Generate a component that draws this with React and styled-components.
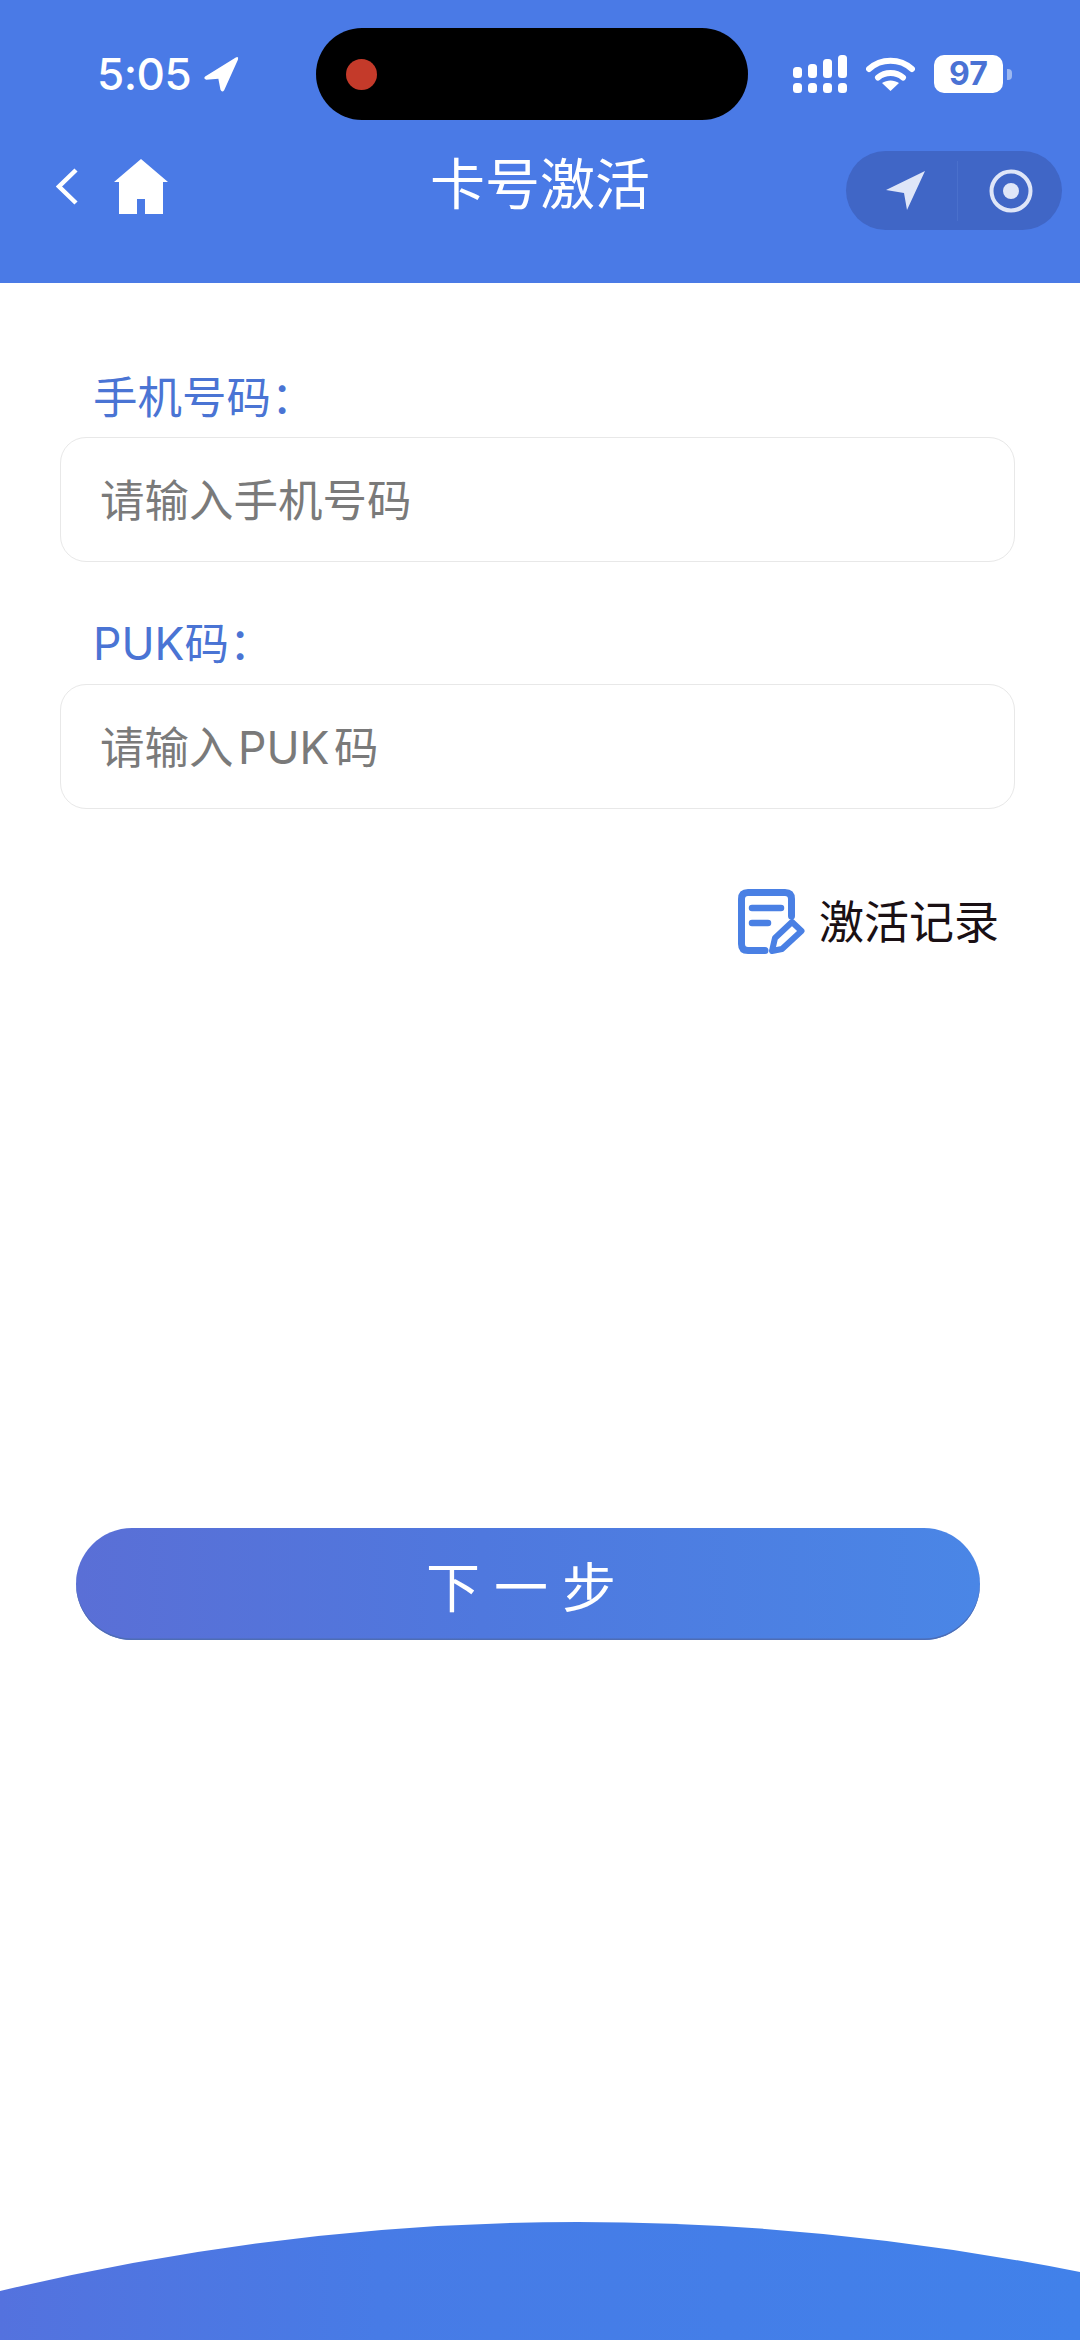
import React from 'react';
import styled, { createGlobalStyle } from 'styled-components';

const GlobalStyle = createGlobalStyle`
  html, body {
    margin: 0;
    padding: 0;
    background: #fff;
  }
  * {
    box-sizing: border-box;
  }
`;

const cjk = `Inter, 'Noto Sans CJK SC', sans-serif`;

const Page = styled.div`
  display: flex;
  flex-direction: column;
  width: 1080px;
  height: 2340px;
  overflow: hidden;
  background: #fff;
  font-family: ${cjk};
`;

const Header = styled.header`
  flex: none;
  height: 283px;
  padding-top: 28px;
  background: #4a7ae6;
  color: #fff;
`;

const StatusBar = styled.div`
  display: flex;
  align-items: center;
  height: 92px;
  padding-left: 97px;
`;

const TimeGroup = styled.div`
  display: flex;
  align-items: center;
  gap: 12px;
  width: 219px;
  font-size: 44px;
  font-weight: 500;
  letter-spacing: -0.5px;
  line-height: 92px;
`;

const Island = styled.div`
  display: flex;
  align-items: center;
  width: 432px;
  height: 92px;
  padding-left: 30px;
  border-radius: 46px;
  background: #000;
`;

const RecordDot = styled.span`
  width: 31px;
  height: 31px;
  border-radius: 50%;
  background: #c43a2a;
`;

const StatusIcons = styled.div`
  display: flex;
  align-items: center;
  margin-left: 45px;
`;

const Battery = styled.div`
  display: flex;
  align-items: center;
  justify-content: center;
  width: 69px;
  height: 38px;
  margin-left: 19px;
  border-radius: 10px;
  background: #fff;
  color: #4a72d4;
  font-size: 32px;
  font-weight: 700;
  line-height: 38px;
`;

const BatteryNub = styled.span`
  width: 5px;
  height: 11px;
  margin-left: 4px;
  border-radius: 0 4px 4px 0;
  background: #9db8f0;
`;

const NavBar = styled.div`
  display: grid;
  grid-template-columns: 1fr auto 1fr;
  align-items: center;
  height: 79px;
  margin-top: 31px;
`;

const NavLeft = styled.div`
  display: flex;
  align-items: center;
  gap: 36px;
  padding: 0 0 9px 56px;
`;

const Title = styled.h1`
  margin: 0 0 12px;
  font-size: 55px;
  font-weight: 400;
  line-height: 67px;
`;

const Capsule = styled.div`
  display: flex;
  align-items: center;
  justify-self: end;
  width: 216px;
  height: 79px;
  margin-right: 18px;
  border-radius: 40px;
  background: #4066c6;
`;

const CapsuleSlot = styled.div`
  display: flex;
  flex: 1;
  align-items: center;
  justify-content: center;
  height: 60px;
  padding-left: ${p => p.$shift || 0}px;
  & + & {
    border-left: 1px solid #4a70cc;
  }
`;

const Form = styled.main`
  display: flex;
  flex-direction: column;
  padding: 85px 65px 0 60px;
`;

const Label = styled.label`
  height: 60px;
  margin: ${p => (p.$first ? '0 0 9px' : '52px 0 10px')} 33px;
  color: #4a74d4;
  font-size: 44.5px;
  font-weight: 400;
  line-height: 60px;
`;

const Field = styled.div`
  display: flex;
  align-items: center;
  height: 125px;
  padding: 0 0 5px 39px;
  border: 1.5px solid #e8e8e8;
  border-radius: 26px;
  color: #7a7a7a;
  font-size: 44.5px;
  font-weight: 400;
  word-spacing: -8px;
  white-space: pre;
`;

const RecordLink = styled.a`
  display: flex;
  align-items: center;
  align-self: flex-end;
  gap: 14px;
  height: 65px;
  margin: 80px 16px 0 0;
  color: #1a1014;
  font-size: 45px;
  font-weight: 400;
`;

const RecordText = styled.span`
  padding-bottom: 5px;
`;

const NextButton = styled.button`
  display: block;
  flex: none;
  width: 904px;
  height: 112px;
  margin: 574px 0 0 76px;
  padding: 0;
  border: none;
  border-radius: 56px;
  background: linear-gradient(90deg, #5a6fd6 0%, #4f78de 45%, #4a86e6 100%);
  box-shadow: inset 0 -1.5px 0 #4e6db4;
  color: #fff;
  font-family: ${cjk};
  font-size: 54px;
  font-weight: 400;
  letter-spacing: 14px;
`;

const Wave = styled.svg`
  display: block;
  flex: none;
  width: 1080px;
  height: 118px;
  margin-top: auto;
`;

const App = () => (
  <Page>
    <GlobalStyle />
    <Header>
      <StatusBar>
        <TimeGroup>
          <span>5:05</span>
          <svg width="36" height="37" viewBox="0 0 34 35">
            <path
              d="M2 19.5 L31 1.5 Q34 0 33 3.5 L20 32.5 Q18 35 16.5 32 L14.5 21.5 L3 22.5 Q0 21.5 2 19.5Z"
              fill="#fff"
            />
          </svg>
        </TimeGroup>
        <Island>
          <RecordDot />
        </Island>
        <StatusIcons>
          <svg width="54" height="38" viewBox="0 0 54 38" fill="#fff">
            <rect x="0" y="12" width="9" height="11" rx="3.5" />
            <rect x="15" y="9" width="9" height="14" rx="3.5" />
            <rect x="30" y="4" width="9" height="19" rx="3.5" />
            <rect x="45" y="0" width="9" height="23" rx="3.5" />
            <rect x="0" y="28" width="9" height="10" rx="3.5" />
            <rect x="15" y="28" width="9" height="10" rx="3.5" />
            <rect x="30" y="28" width="9" height="10" rx="3.5" />
            <rect x="45" y="28" width="9" height="10" rx="3.5" />
          </svg>
          <svg width="49" height="34" viewBox="0 0 49 34" style={{ marginLeft: 19 }}>
            <path d="M3 12 C15 1 34 1 46 12" fill="none" stroke="#fff" strokeWidth="6" strokeLinecap="round" />
            <path d="M12 20.5 C19 14.5 30 14.5 37 20.5" fill="none" stroke="#fff" strokeWidth="6" strokeLinecap="round" />
            <path d="M24.5 34 L16 26 C21 22.5 28 22.5 33 26Z" fill="#fff" />
          </svg>
          <Battery>97</Battery>
          <BatteryNub />
        </StatusIcons>
      </StatusBar>
      <NavBar>
        <NavLeft>
          <svg width="22" height="37" viewBox="0 0 22 37">
            <path d="M20 2 L3 18.5 L20 35" fill="none" stroke="#fff" strokeWidth="4.5" />
          </svg>
          <svg width="54" height="55" viewBox="0 0 54 55" fill="#fff">
            <path d="M27 0 L54 23 L49 23 L49 55 L31 55 L31 40 L23 40 L23 55 L5 55 L5 23 L0 23Z" />
          </svg>
        </NavLeft>
        <Title>卡号激活</Title>
        <Capsule>
          <CapsuleSlot $shift={8}>
            <svg width="39" height="39" viewBox="0 0 39 39">
              <path d="M0 19 L39 0 L21 39 L18 22Z" fill="#dfe6f8" />
            </svg>
          </CapsuleSlot>
          <CapsuleSlot $shift={2}>
            <svg width="44" height="44" viewBox="0 0 44 44">
              <circle cx="22" cy="22" r="19.5" fill="none" stroke="#dfe6f8" strokeWidth="4" />
              <circle cx="22" cy="22" r="8" fill="#dfe6f8" />
            </svg>
          </CapsuleSlot>
        </Capsule>
      </NavBar>
    </Header>
    <Form>
      <Label $first>手机号码：</Label>
      <Field>请输入手机号码</Field>
      <Label>PUK码：</Label>
      <Field>请输入 PUK 码</Field>
      <RecordLink>
        <svg width="67" height="65" viewBox="0 0 67 65" fill="none" stroke="#4a80e4" strokeLinecap="round" strokeLinejoin="round">
          <path d="M27 61.5 L10 61.5 Q3.5 61.5 3.5 55 L3.5 10 Q3.5 3.5 10 3.5 L47 3.5 Q53.5 3.5 53.5 10 L53.5 27" strokeWidth="7" />
          <path d="M14 19 L43 19 M14 34 L30 34" strokeWidth="6.5" />
          <path d="M54 33 L63.5 42 L44 60 L34 62 L37 49Z" strokeWidth="6" />
        </svg>
        <RecordText>激活记录</RecordText>
      </RecordLink>
    </Form>
    <NextButton>下一步</NextButton>
    <Wave viewBox="0 0 1080 118">
      <defs>
        <linearGradient id="waveFill" x1="0" x2="1" y1="0" y2="0">
          <stop offset="0" stopColor="#5472de" />
          <stop offset="0.35" stopColor="#477be6" />
          <stop offset="1" stopColor="#4181ea" />
        </linearGradient>
      </defs>
      <path d="M0 69 Q289 0 578 0 Q829 0 1080 50 L1080 118 L0 118Z" fill="url(#waveFill)" />
    </Wave>
  </Page>
);

export default App;
